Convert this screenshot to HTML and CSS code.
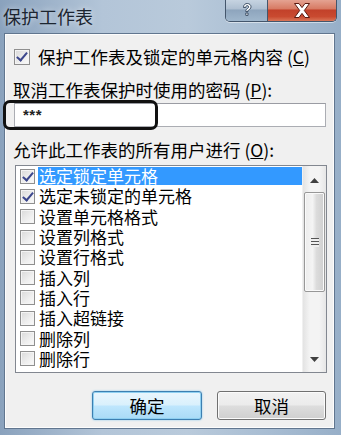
FILE: index.html
```html
<!DOCTYPE html>
<html lang="zh-CN">
<head>
<meta charset="utf-8">
<title>保护工作表</title>
<link rel="stylesheet" href="styles.css">
</head>
<body>
<div class="window">
  <div class="titlebar">
    <div class="title">保护工作表</div>
    <div class="caps">
      <div class="cap help">
        <svg width="16" height="16" viewBox="0 0 16 16"><path d="M4.5 5.5 C4.5 2.5 6.5 1.5 8.2 1.5 C10.5 1.5 12 3 12 4.8 C12 6.6 10.8 7.3 9.6 8 C9 8.4 9 8.8 9 9.6 L6.8 9.6 C6.8 8.2 7 7.4 8.2 6.7 C9.3 6 9.6 5.6 9.6 4.9 C9.6 4.1 9 3.6 8.2 3.6 C7.3 3.6 6.8 4.3 6.8 5.5 Z M6.8 11 L9 11 L9 13.4 L6.8 13.4 Z" fill="#ffffff" stroke="#2f4259" stroke-width="0.9"/></svg>
      </div>
      <div class="cap close">
        <svg width="20" height="17" viewBox="0 0 20 17"><path d="M2.5 1.5 L7 1.5 L10 5.6 L13 1.5 L17.5 1.5 L12.3 8.5 L17.5 15.5 L13 15.5 L10 11.4 L7 15.5 L2.5 15.5 L7.7 8.5 Z" fill="#ffffff" stroke="#5a1a10" stroke-width="1"/></svg>
      </div>
    </div>
  </div>
  <div class="client">
    <div class="chk-line"><span class="cb checked"></span><span class="t">保护工作表及锁定的单元格内容 (<u>C</u>)</span></div>
    <div class="label l2">取消工作表保护时使用的密码 (<u>P</u>):</div>
    <div class="pw-wrap">
      <div class="pw">***</div>
      <div class="ring"></div>
    </div>
    <div class="label l3">允许此工作表的所有用户进行 (<u>O</u>):</div>
    <div class="list">
      <div class="items">
        <div class="row"><span class="cb checked"></span><span class="txt sel">选定锁定单元格</span></div>
        <div class="row"><span class="cb checked"></span><span class="txt">选定未锁定的单元格</span></div>
        <div class="row"><span class="cb"></span><span class="txt">设置单元格格式</span></div>
        <div class="row"><span class="cb"></span><span class="txt">设置列格式</span></div>
        <div class="row"><span class="cb"></span><span class="txt">设置行格式</span></div>
        <div class="row"><span class="cb"></span><span class="txt">插入列</span></div>
        <div class="row"><span class="cb"></span><span class="txt">插入行</span></div>
        <div class="row"><span class="cb"></span><span class="txt">插入超链接</span></div>
        <div class="row"><span class="cb"></span><span class="txt">删除列</span></div>
        <div class="row"><span class="cb"></span><span class="txt">删除行</span></div>
      </div>
      <div class="scrollbar">
        <div class="arrow up"><svg width="9" height="5" viewBox="0 0 9 5"><path d="M0 5 L4.5 0 L9 5 Z" fill="#404040"/></svg></div>
        <div class="track">
          <div class="thumb"><span class="grip"></span></div>
        </div>
        <div class="arrow down"><svg width="9" height="5" viewBox="0 0 9 5"><path d="M0 0 L9 0 L4.5 5 Z" fill="#404040"/></svg></div>
      </div>
    </div>
    <div class="buttons">
      <div class="btn ok">确定</div>
      <div class="btn cancel">取消</div>
    </div>
  </div>
</div>
</body>
</html>
```
FILE: styles.css
```css
* { box-sizing: border-box; }
html, body { margin: 0; padding: 0; }
body {
  width: 341px;
  height: 435px;
  overflow: hidden;
  font-family: "Noto Sans CJK SC", "Noto Sans", sans-serif;
  color: #000;
}
.window {
  width: 341px;
  height: 435px;
  display: flex;
  flex-direction: column;
  background: linear-gradient(to right, #8aa2bd 0%, #b3c5d8 30%, #b9cadb 55%, #a7bcd2 80%, #97afc8 100%);
}
.titlebar {
  height: 33px;
  display: flex;
  justify-content: space-between;
  align-items: flex-start;
  flex-shrink: 0;
}
.title {
  margin: 5px 0 0 3px;
  font-size: 18px;
  line-height: 22px;
  color: #1c2530;
  text-shadow: 0 0 6px rgba(255,255,255,0.7);
}
.caps {
  display: flex;
  margin: -1px 4px 0 0;
  height: 23px;
  border: 1px solid #44566c;
  border-top: none;
  border-radius: 0 0 5px 5px;
  overflow: hidden;
  box-shadow: 0 1px 0 rgba(255,255,255,0.5);
}
.cap {
  height: 22px;
  display: flex;
  align-items: center;
  justify-content: center;
}
.help {
  width: 42px;
  background: linear-gradient(#c9d6e3 0%, #aebfd1 45%, #8ea5bd 50%, #9fb6cc 100%);
  border-right: 1px solid #44566c;
}
.close {
  width: 68px;
  background: linear-gradient(#e6a797 0%, #d77a63 45%, #c2412a 50%, #c94a30 80%, #d97557 100%);
}
.client {
  margin: 0 6px 6px 4px;
  flex: 1;
  background: #f0f0f0;
  border: 1px solid #61768f;
  box-shadow: inset 0 0 0 1px #fdfdfd;
  display: flex;
  flex-direction: column;
}
.chk-line {
  margin-top: 13px;
  padding-left: 9px;
  height: 20px;
  display: flex;
  align-items: center;
  gap: 8px;
  font-size: 17.5px;
  line-height: 20px;
  white-space: nowrap;
}
.chk-line .cb { width: 16px; height: 16px; }
.label {
  padding-left: 8px;
  font-size: 17.5px;
  line-height: 20px;
  height: 20px;
  white-space: nowrap;
}
.l2 { margin-top: 13px; }
.l3 { margin-top: 13px; }
u { text-decoration: underline; text-underline-offset: 1px; }
.pw-wrap {
  position: relative;
  margin: 3px 0 0 9px;
  width: 312px;
  height: 24px;
}
.pw {
  width: 100%;
  height: 100%;
  background: #fff;
  border: 1px solid #abadb3;
  border-top-color: #9a9ca3;
  padding: 0 0 0 8px;
  font-family: "Liberation Sans", sans-serif;
  font-weight: bold;
  font-size: 15px;
  line-height: 22px;
  letter-spacing: 0.5px;
  color: #222;
}
.ring {
  position: absolute;
  left: -11px;
  top: -3px;
  width: 155px;
  height: 30px;
  border: 3px solid #111;
  border-radius: 7px;
}
.list {
  margin: 5px 0 0 10px;
  width: 312px;
  height: 208px;
  background: #fff;
  border: 1px solid #828790;
  display: flex;
}
.items {
  flex: 1;
  display: flex;
  flex-direction: column;
}
.row {
  height: 20.3px;
  display: flex;
  align-items: center;
  padding-left: 4px;
  gap: 3px;
  font-size: 17px;
  line-height: 18px;
  white-space: nowrap;
}
.txt {
  flex: 1;
  height: 18px;
  line-height: 18px;
  padding-left: 1px;
}
.txt.sel {
  background: #3399ff;
  color: #fff;
}
.cb {
  width: 15px;
  height: 15px;
  flex-shrink: 0;
  border: 1px solid #8f8f8f;
  background: linear-gradient(135deg, #d9d9d9 0%, #efefef 60%, #fafafa 100%);
  box-shadow: inset 0 0 0 1px #f4f4f4;
  position: relative;
}
.cb.checked::after {
  content: "";
  position: absolute;
  left: 4px;
  top: 0px;
  width: 4px;
  height: 9px;
  border-right: 2px solid #3b468c;
  border-bottom: 2px solid #3b468c;
  transform: rotate(40deg);
}
.scrollbar {
  width: 24px;
  display: flex;
  flex-direction: column;
  background: linear-gradient(to right, #e3e3e3, #f4f4f4 30%, #f4f4f4 70%, #e6e6e6);
  border-left: 1px solid #f0f0f0;
}
.arrow {
  height: 24px;
  display: flex;
  align-items: center;
  justify-content: center;
}
.arrow.up { align-items: flex-end; padding-bottom: 7px; }
.arrow.down { align-items: flex-start; padding-top: 9px; }
.track {
  flex: 1;
  padding: 2px 1px 0 1px;
}
.thumb {
  height: 100px;
  border: 1px solid #989898;
  border-radius: 2px;
  background: linear-gradient(to right, #ececec 0%, #f4f4f4 40%, #dcdcdc 60%, #cfcfcf 100%);
  box-shadow: inset 0 0 0 1px #fafafa;
  display: flex;
  align-items: center;
  justify-content: center;
}
.grip {
  width: 8px;
  height: 9px;
  background: repeating-linear-gradient(#555 0px, #555 1px, #eee 1px, #eee 3px);
}
.buttons {
  margin-top: 18px;
  display: flex;
  justify-content: flex-end;
  gap: 15px;
  padding-right: 8px;
}
.btn {
  height: 29px;
  display: flex;
  align-items: center;
  justify-content: center;
  font-size: 17.5px;
  line-height: 20px;
  border-radius: 3px;
}
.ok {
  width: 110px;
  border: 1px solid #3c7fb1;
  background: linear-gradient(#eaf6fd 0%, #d9f0fc 48%, #bee6fd 52%, #a9dbf6 100%);
  box-shadow: inset 0 0 0 1px #8fd0f1, 0 0 2px #7cc3ec;
}
.cancel {
  width: 109px;
  border: 1px solid #707070;
  background: linear-gradient(#f2f2f2 0%, #ebebeb 48%, #dddddd 52%, #cfcfcf 100%);
  box-shadow: inset 0 0 0 1px #fbfbfb;
}
```
